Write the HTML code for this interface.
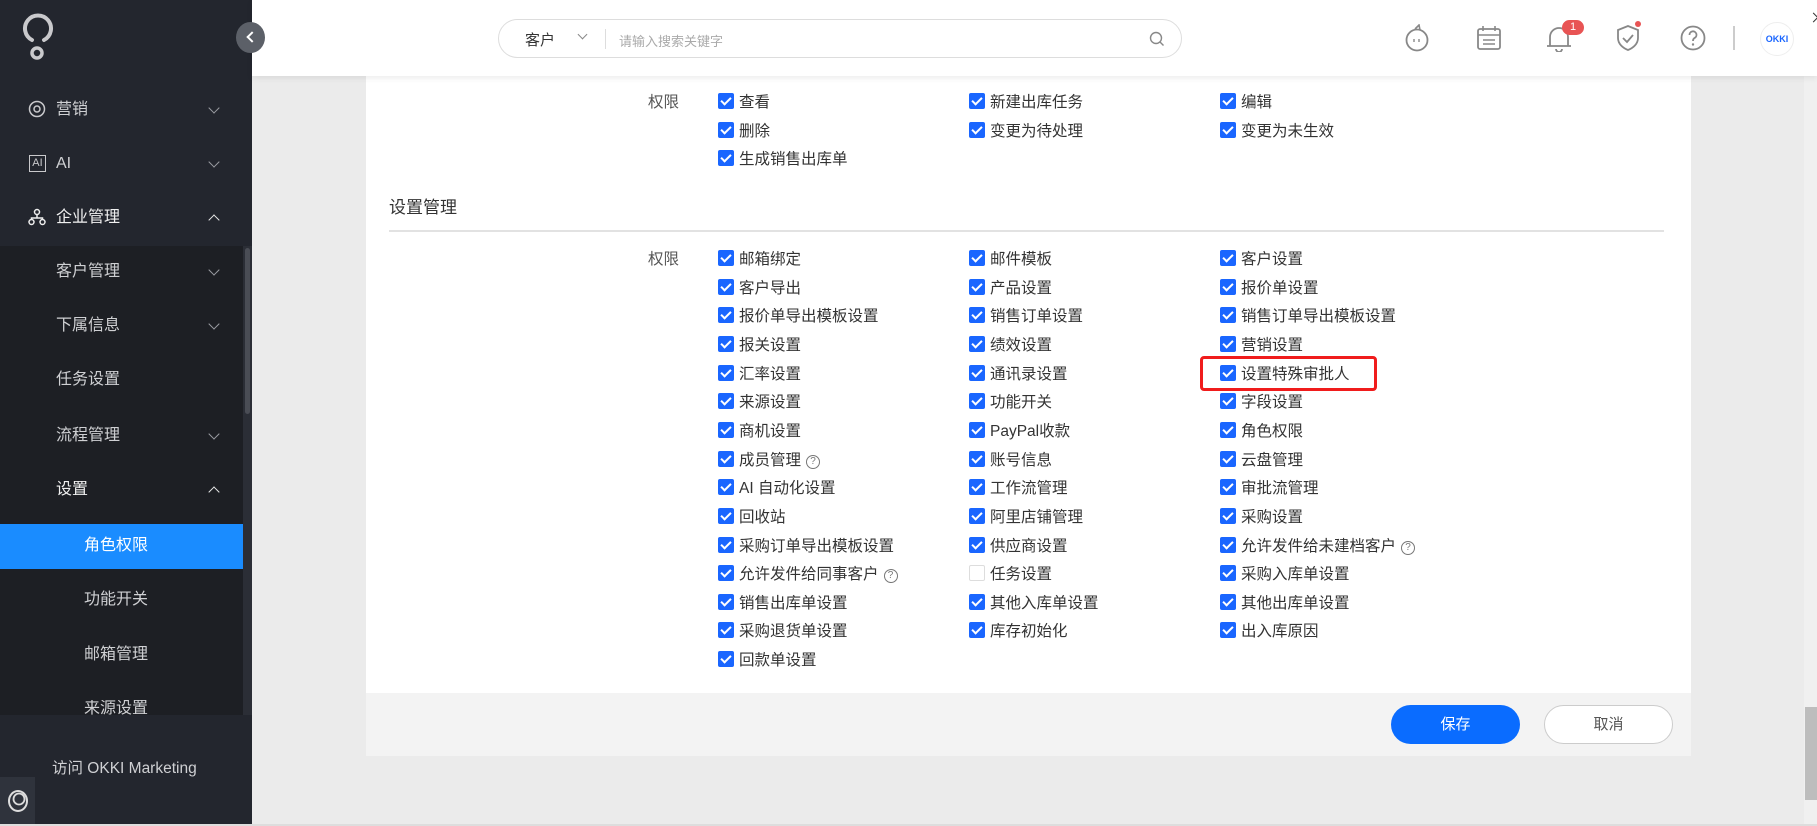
<!DOCTYPE html>
<html><head><meta charset="utf-8"><style>
*{margin:0;padding:0;box-sizing:border-box}
body{width:1817px;height:826px;overflow:hidden;background:#ebebeb;font-family:"Liberation Sans","Noto Sans CJK SC",sans-serif;position:relative;color:#333}
.sb{position:absolute;left:0;top:0;width:252px;height:826px;background:#23262e}
.sub{position:absolute;left:0;top:246px;width:243px;height:469px;background:#1d1f24}
.si{position:absolute;color:#cfd0d3;font-size:16px;line-height:20px}
.chev{position:absolute;left:210px;width:8px;height:8px;border-right:1.5px solid #9a9ca2;border-bottom:1.5px solid #9a9ca2;transform:rotate(45deg)}
.chev.up{transform:rotate(-135deg);border-color:#e6e6e6}
.hdr{position:absolute;left:252px;top:0;width:1565px;height:76px;background:#fff;box-shadow:0 2px 6px rgba(0,0,0,.08);z-index:2}
.card{position:absolute;left:366px;top:76px;width:1325px;height:617px;background:#fff}
.foot{position:absolute;left:366px;top:693px;width:1325px;height:63px;background:#f3f3f3}
.r{position:absolute;height:20px;line-height:20px;font-size:15.5px;color:#333;white-space:nowrap}
.r i{display:inline-block;width:16px;height:16px;background:#1a66ff;border-radius:2px;vertical-align:-2px;margin-right:5px;position:relative}
.r i:after{content:"";position:absolute;left:5px;top:1.5px;width:4px;height:8px;border-right:2px solid #fff;border-bottom:2px solid #fff;transform:rotate(45deg)}
.r i.u{background:#fff;border:1px solid #ddd}.r i.u:after{display:none}
.q{display:inline-block;width:14px;height:14px;border:1.3px solid #777;border-radius:50%;font-size:10px;line-height:12px;text-align:center;color:#777;margin-left:5px;vertical-align:1px}
.c1{left:718px}.c2{left:969px}.c3{left:1220px}
.lbl{position:absolute;left:648px;font-size:15.5px;color:#555;line-height:20px}
</style></head><body>
<div class="sb">
  <svg style="position:absolute;left:22px;top:12px" width="32" height="50" viewBox="0 0 32 50"><path d="M10 28 A13 13 0 1 1 22 28" fill="none" stroke="#c9c9cc" stroke-width="4" stroke-linecap="round"/><circle cx="15" cy="41" r="5" fill="none" stroke="#c9c9cc" stroke-width="3.5"/></svg>
  <svg style="position:absolute;left:28px;top:100px" width="18" height="18"><circle cx="9" cy="9" r="7.5" fill="none" stroke="#c9c9cc" stroke-width="1.5"/><circle cx="9" cy="9" r="3" fill="none" stroke="#c9c9cc" stroke-width="1.5"/></svg>
  <div class="si" style="left:56px;top:100px">营销</div><div class="chev" style="top:104px"></div>
  <div style="position:absolute;left:29px;top:155px;width:17px;height:17px;border:1.3px solid #c9c9cc;font-size:11px;color:#c9c9cc;line-height:14px;text-align:center">AI</div>
  <div class="si" style="left:56px;top:154px">AI</div><div class="chev" style="top:158px"></div>
  <svg style="position:absolute;left:28px;top:208px" width="18" height="18"><circle cx="9" cy="4" r="2.5" fill="none" stroke="#eee" stroke-width="1.5"/><circle cx="3.5" cy="14" r="2.5" fill="none" stroke="#eee" stroke-width="1.5"/><circle cx="14.5" cy="14" r="2.5" fill="none" stroke="#eee" stroke-width="1.5"/><path d="M9 6.5V10M3.5 11.5V10H14.5V11.5" fill="none" stroke="#eee" stroke-width="1.5"/></svg>
  <div class="si" style="left:56px;top:208px;color:#f0f0f0">企业管理</div><div class="chev up" style="top:216px"></div>
  <div class="sub"></div>
  <div style="position:absolute;left:243px;top:246px;width:9px;height:469px;background:#2b2e36"></div>
  <div style="position:absolute;left:245px;top:248px;width:5px;height:166px;background:#4a4d55;border-radius:3px"></div>
  <div class="si" style="left:56px;top:262px">客户管理</div><div class="chev" style="top:266px"></div>
  <div class="si" style="left:56px;top:316px">下属信息</div><div class="chev" style="top:320px"></div>
  <div class="si" style="left:56px;top:370px">任务设置</div>
  <div class="si" style="left:56px;top:426px">流程管理</div><div class="chev" style="top:430px"></div>
  <div class="si" style="left:56px;top:480px;color:#f0f0f0">设置</div><div class="chev up" style="top:488px"></div>
  <div style="position:absolute;left:0;top:524px;width:243px;height:45px;background:#1a8cff"></div>
  <div class="si" style="left:84px;top:536px;color:#fff">角色权限</div>
  <div class="si" style="left:84px;top:590px">功能开关</div>
  <div class="si" style="left:84px;top:645px">邮箱管理</div>
  <div style="position:absolute;left:0;top:700px;width:243px;height:15px;overflow:hidden"><div class="si" style="left:84px;top:-1px">来源设置</div></div>
  <div style="position:absolute;left:0;top:715px;width:252px;height:111px;background:#23262e"></div>
  <div class="si" style="left:52px;top:759px;font-size:15.5px">访问 OKKI Marketing</div>
  <div style="position:absolute;left:0;top:777px;width:35px;height:47px;background:#2f333c"></div>
  <svg style="position:absolute;left:7px;top:789px" width="22" height="24"><ellipse cx="11" cy="12" rx="9" ry="10" fill="none" stroke="#ddd" stroke-width="2"/><ellipse cx="12" cy="10" rx="5.5" ry="5.5" fill="none" stroke="#ddd" stroke-width="1.8"/></svg>
</div>
<div style="position:absolute;left:236px;top:22px;width:29px;height:31px;border-radius:50%;background:#5c6068;z-index:5"><div style="position:absolute;left:12px;top:11px;width:8px;height:8px;border-left:2px solid #fff;border-bottom:2px solid #fff;transform:rotate(45deg)"></div></div>
<div class="hdr">
  <div style="position:absolute;left:246px;top:19px;width:684px;height:39px;border:1px solid #ddd;border-radius:20px">
    <span style="position:absolute;left:26px;top:9px;font-size:15px;color:#333">客户</span>
    <div style="position:absolute;left:80px;top:11px;width:7px;height:7px;border-right:1.3px solid #888;border-bottom:1.3px solid #888;transform:rotate(45deg)"></div>
    <div style="position:absolute;left:106px;top:9px;width:1px;height:20px;background:#ddd"></div>
    <span style="position:absolute;left:120px;top:11px;font-size:13px;color:#aaa">请输入搜索关键字</span>
    <svg style="position:absolute;left:650px;top:11px" width="16" height="16"><circle cx="7" cy="7" r="5.5" fill="none" stroke="#888" stroke-width="1.4"/><path d="M11 11l3.5 3.5" stroke="#888" stroke-width="1.4"/></svg>
  </div>
  <svg style="position:absolute;left:1152px;top:24px" width="26" height="28"><circle cx="13" cy="16" r="10.5" fill="none" stroke="#888" stroke-width="1.8"/><path d="M11 5 L15 1 L16 6" fill="none" stroke="#888" stroke-width="1.6"/><path d="M10 15v3M15 15v3" stroke="#888" stroke-width="1.4"/></svg>
  <svg style="position:absolute;left:1224px;top:25px" width="26" height="26"><rect x="2" y="4" width="22" height="20" rx="2" fill="none" stroke="#888" stroke-width="1.8"/><path d="M7 1v5M19 1v5M2 10h22M7 15h12M7 19h12" stroke="#888" stroke-width="1.6"/></svg>
  <svg style="position:absolute;left:1293px;top:24px" width="28" height="28"><path d="M5 22V13a9 9 0 0 1 18 0v9M2 22h24M11 25a3 3 0 0 0 6 0" fill="none" stroke="#888" stroke-width="1.8"/></svg>
  <div style="position:absolute;left:1310px;top:20px;width:22px;height:15px;border-radius:8px;background:#e85454;color:#fff;font-size:11px;text-align:center;line-height:15px">1</div>
  <svg style="position:absolute;left:1363px;top:24px" width="26" height="28"><path d="M13 2L3 6v8c0 6 5 10 10 12 5-2 10-6 10-12V6z" fill="none" stroke="#888" stroke-width="1.8"/><path d="M8 14l4 4 6-7" fill="none" stroke="#888" stroke-width="1.8"/></svg>
  <div style="position:absolute;left:1383px;top:21px;width:6px;height:6px;border-radius:50%;background:#e85454"></div>
  <svg style="position:absolute;left:1428px;top:25px" width="26" height="26"><circle cx="13" cy="13" r="11.5" fill="none" stroke="#888" stroke-width="1.8"/><path d="M9.5 10a3.5 3.5 0 1 1 5 3c-1.3.7-1.5 1.5-1.5 3" fill="none" stroke="#888" stroke-width="1.8"/><circle cx="13" cy="19.5" r="1.2" fill="#888"/></svg>
  <div style="position:absolute;left:1481px;top:26px;width:1.5px;height:24px;background:#ccc"></div>
  <div style="position:absolute;left:1508px;top:22px;width:34px;height:34px;border-radius:50%;border:1px solid #eee;color:#1a66ff;font-size:9px;font-weight:bold;text-align:center;line-height:32px">OKKI</div>
  <div style="position:absolute;left:1558px;top:14px;width:7px;height:7px;border-right:1.5px solid #333;border-top:1.5px solid #333;transform:rotate(45deg)"></div>
</div>
<div class="card">
  <div style="position:absolute;left:23px;top:117px;font-size:17px;color:#333">设置管理</div>
  <div style="position:absolute;left:23px;top:154px;width:1275px;height:2px;background:#e2e2e2"></div>
</div>
<div class="foot"></div>
<div style="position:absolute;left:1391px;top:705px;width:129px;height:39px;border-radius:20px;background:#0a6cff;color:#fff;font-size:15px;text-align:center;line-height:39px">保存</div>
<div style="position:absolute;left:1544px;top:705px;width:129px;height:39px;border-radius:20px;background:#fff;border:1px solid #ccc;color:#555;font-size:15px;text-align:center;line-height:37px">取消</div>
<div style="position:absolute;left:1804px;top:76px;width:13px;height:748px;background:#f0f0f0"></div>
<div style="position:absolute;left:1805px;top:707px;width:12px;height:93px;background:#bdbdbd"></div>
<div style="position:absolute;left:0;top:824px;width:1817px;height:2px;background:#ddd"></div>

<div class="lbl" style="top:93px">权限</div>
<div class="r c1" style="top:93px"><i></i>查看</div><div class="r c2" style="top:93px"><i></i>新建出库任务</div><div class="r c3" style="top:93px"><i></i>编辑</div>
<div class="r c1" style="top:122px"><i></i>删除</div><div class="r c2" style="top:122px"><i></i>变更为待处理</div><div class="r c3" style="top:122px"><i></i>变更为未生效</div>
<div class="r c1" style="top:150px"><i></i>生成销售出库单</div>

<div class="lbl" style="top:250px">权限</div>
<div class="r c1" style="top:250px"><i></i>邮箱绑定</div><div class="r c2" style="top:250px"><i></i>邮件模板</div><div class="r c3" style="top:250px"><i></i>客户设置</div>
<div class="r c1" style="top:279px"><i></i>客户导出</div><div class="r c2" style="top:279px"><i></i>产品设置</div><div class="r c3" style="top:279px"><i></i>报价单设置</div>
<div class="r c1" style="top:307px"><i></i>报价单导出模板设置</div><div class="r c2" style="top:307px"><i></i>销售订单设置</div><div class="r c3" style="top:307px"><i></i>销售订单导出模板设置</div>
<div class="r c1" style="top:336px"><i></i>报关设置</div><div class="r c2" style="top:336px"><i></i>绩效设置</div><div class="r c3" style="top:336px"><i></i>营销设置</div>
<div class="r c1" style="top:365px"><i></i>汇率设置</div><div class="r c2" style="top:365px"><i></i>通讯录设置</div><div class="r c3" style="top:365px"><i></i>设置特殊审批人</div>
<div style="position:absolute;left:1200px;top:356px;width:177px;height:35px;border:3px solid #f01c1c;border-radius:4px"></div>
<div class="r c1" style="top:393px"><i></i>来源设置</div><div class="r c2" style="top:393px"><i></i>功能开关</div><div class="r c3" style="top:393px"><i></i>字段设置</div>
<div class="r c1" style="top:422px"><i></i>商机设置</div><div class="r c2" style="top:422px"><i></i>PayPal收款</div><div class="r c3" style="top:422px"><i></i>角色权限</div>
<div class="r c1" style="top:451px"><i></i>成员管理<span class="q">?</span></div><div class="r c2" style="top:451px"><i></i>账号信息</div><div class="r c3" style="top:451px"><i></i>云盘管理</div>
<div class="r c1" style="top:479px"><i></i>AI 自动化设置</div><div class="r c2" style="top:479px"><i></i>工作流管理</div><div class="r c3" style="top:479px"><i></i>审批流管理</div>
<div class="r c1" style="top:508px"><i></i>回收站</div><div class="r c2" style="top:508px"><i></i>阿里店铺管理</div><div class="r c3" style="top:508px"><i></i>采购设置</div>
<div class="r c1" style="top:537px"><i></i>采购订单导出模板设置</div><div class="r c2" style="top:537px"><i></i>供应商设置</div><div class="r c3" style="top:537px"><i></i>允许发件给未建档客户<span class="q">?</span></div>
<div class="r c1" style="top:565px"><i></i>允许发件给同事客户<span class="q">?</span></div><div class="r c2" style="top:565px"><i class="u"></i>任务设置</div><div class="r c3" style="top:565px"><i></i>采购入库单设置</div>
<div class="r c1" style="top:594px"><i></i>销售出库单设置</div><div class="r c2" style="top:594px"><i></i>其他入库单设置</div><div class="r c3" style="top:594px"><i></i>其他出库单设置</div>
<div class="r c1" style="top:622px"><i></i>采购退货单设置</div><div class="r c2" style="top:622px"><i></i>库存初始化</div><div class="r c3" style="top:622px"><i></i>出入库原因</div>
<div class="r c1" style="top:651px"><i></i>回款单设置</div>
</body></html>
